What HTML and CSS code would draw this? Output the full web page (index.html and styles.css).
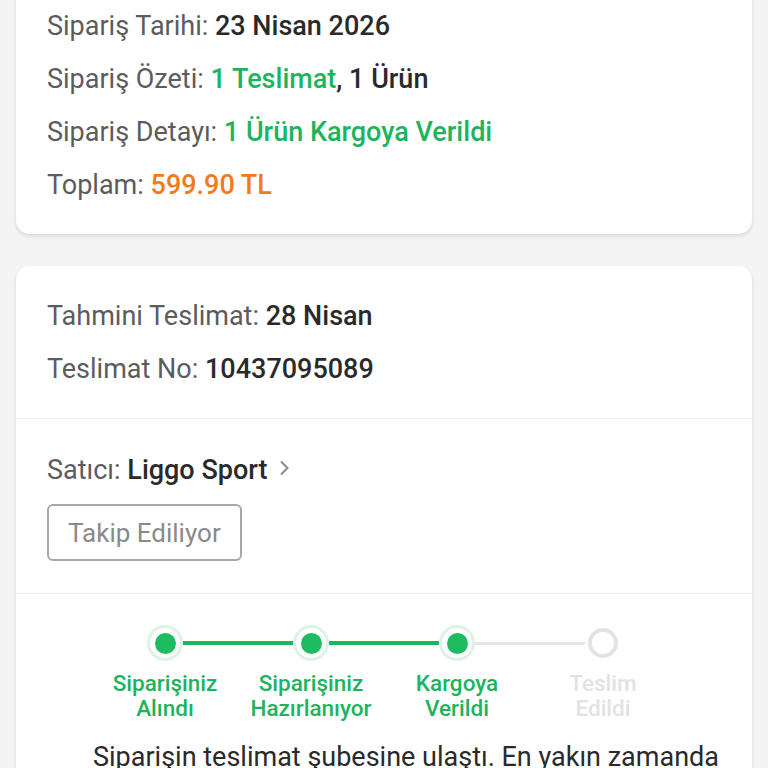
FILE: index.html
```html
<!DOCTYPE html>
<html lang="tr">
<head>
  <meta charset="UTF-8">
  <meta name="viewport" content="width=device-width, initial-scale=1.0">
  <title>Sipariş Detayı</title>
  <link rel="stylesheet" href="styles.css">
</head>
<body>

  <!-- sipariş özeti -->
  <div class="card summary">
    <div class="row"><span class="label">Sipariş Tarihi:</span> <span class="value">23 Nisan 2026</span></div>
    <div class="row"><span class="label">Sipariş Özeti:</span> <span class="green">1 Teslimat</span><span class="value">, 1 Ürün</span></div>
    <div class="row"><span class="label">Sipariş Detayı:</span> <span class="green">1 Ürün Kargoya Verildi</span></div>
    <div class="row"><span class="label">Toplam:</span> <span class="orange">599.90 TL</span></div>
  </div>

  <!-- teslimat -->
  <div class="card delivery">
    <div class="section info">
      <div class="row"><span class="label">Tahmini Teslimat:</span> <span class="value">28 Nisan</span></div>
      <div class="row"><span class="label">Teslimat No:</span> <span class="value">10437095089</span></div>
    </div>

    <div class="section seller">
      <div class="row">
        <span class="label">Satıcı:</span> <span class="value">Liggo Sport</span>
        <svg class="chevron" width="14" height="20" viewBox="0 0 14 20"><path d="M4 3.5l6.5 6.5-6.5 6.5" fill="none" stroke="#888" stroke-width="2"/></svg>
      </div>
      <button class="follow-btn">Takip Ediliyor</button>
    </div>

    <div class="section tracking">
      <div class="stepper">
        <div class="dots">
          <span class="dot done"></span>
          <span class="line done"></span>
          <span class="dot done"></span>
          <span class="line done"></span>
          <span class="dot done"></span>
          <span class="line"></span>
          <span class="dot"></span>
        </div>
        <div class="labels">
          <div class="step done">Siparişiniz<br>Alındı</div>
          <div class="step done">Siparişiniz<br>Hazırlanıyor</div>
          <div class="step done">Kargoya<br>Verildi</div>
          <div class="step">Teslim<br>Edildi</div>
        </div>
      </div>
      <p class="status-text">Siparişin teslimat şubesine ulaştı. En yakın zamanda</p>
    </div>
  </div>

</body>
</html>
```

FILE: styles.css
```css
body {
  margin: 0;
  background-color: #f4f4f4;
  font-family: Roboto, 'Noto Sans', sans-serif;
  font-size: 27px;
  overflow: hidden;
}

.card {
  background-color: #fff;
  margin: 0 16px;
  border-radius: 14px;
  box-shadow: 0 2px 4px rgba(0, 0, 0, 0.12);
}

.summary {
  margin-top: -16px;
  padding: 16px 31px 22px;
  border-top-left-radius: 0;
  border-top-right-radius: 0;
}

.delivery {
  margin-top: 32px;
  border-bottom-left-radius: 0;
  border-bottom-right-radius: 0;
}

.row {
  height: 53px;
  line-height: 53px;
  white-space: nowrap;
}

.label {
  color: #5c5c5c;
}

.value {
  color: #2a2a2a;
  font-weight: 500;
}

.green {
  color: #1db45f;
  font-weight: 500;
}

.orange {
  color: #f27a1a;
  font-weight: 500;
}

.section {
  padding: 0 31px;
  border-bottom: 1px solid #ececec;
}

.info {
  padding-top: 24px;
  padding-bottom: 22px;
}

.seller {
  padding-top: 25px;
  padding-bottom: 32px;
}

.chevron {
  margin-left: 3px;
  vertical-align: 1px;
}

.follow-btn {
  display: block;
  margin-top: 7px;
  height: 57px;
  padding: 0 19px;
  background: #fff;
  border: 2px solid #a8a8a8;
  border-radius: 6px;
  font-family: inherit;
  font-size: 26px;
  color: #8a8a8a;
}

.tracking {
  border-bottom: none;
  padding-top: 31px;
}

.stepper {
  width: 584px;
  margin: 0 auto;
}

.dots {
  display: flex;
  align-items: center;
  padding: 0 55px;
}

.dot {
  width: 36px;
  height: 36px;
  box-sizing: border-box;
  border-radius: 50%;
  display: flex;
  align-items: center;
  justify-content: center;
  flex-shrink: 0;
}

.dot::after {
  content: '';
  width: 30px;
  height: 30px;
  box-sizing: border-box;
  border-radius: 50%;
  border: 4px solid #e3e3e3;
}

.dot.done {
  border: 3px solid #dcf3e5;
}

.dot.done::after {
  width: 21px;
  height: 21px;
  border: none;
  background-color: #1fbb61;
}

.line {
  flex: 1;
  height: 3px;
  background-color: #e6e6e6;
}

.line.done {
  height: 4px;
  background-color: #1fb45e;
}

.labels {
  display: grid;
  grid-template-columns: repeat(4, 1fr);
  margin-top: 10px;
}

.step {
  text-align: center;
  font-size: 22.5px;
  line-height: 25px;
  font-weight: 500;
  color: #e2e2e2;
}

.step.done {
  color: #1db45f;
}

.status-text {
  margin: 20px 0 0 46px;
  line-height: 32px;
  color: #2a2a2a;
  white-space: nowrap;
}
```
